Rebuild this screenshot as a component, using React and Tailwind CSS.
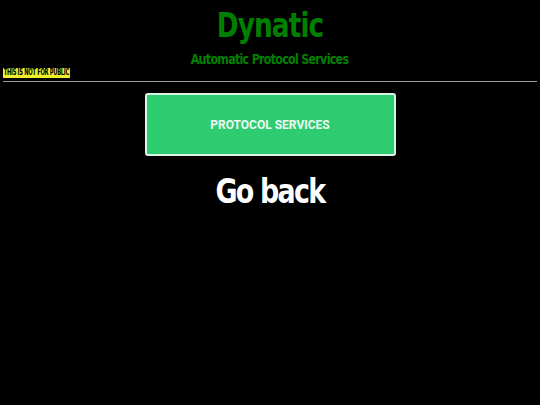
import React from 'react';

const narrow = {
  fontFamily: 'Impact, "Liberation Sans Narrow", "DejaVu Sans", sans-serif',
  fontStretch: 'condensed',
};

const App = () => {
  return (
    <div className="min-h-[405px] bg-black px-[3px]">
      <header className="flex flex-col items-center pt-[5px]">
        <h1 className="inline-block scale-x-[0.86] text-[34px] leading-[40px] font-bold tracking-[-1px] text-[#008000]" style={narrow}>
          Dynatic
        </h1>
        <p className="mt-[6px] inline-block scale-x-[0.88] text-[14px] leading-[16px] font-bold tracking-[-0.8px] text-[#008000]" style={narrow}>
          Automatic Protocol Services
        </p>
      </header>
      <div className="mt-[1px] flex">
        <span className="inline-block origin-left scale-x-[0.72] bg-[#f0f02a] px-[1px] text-[8px] leading-[10px] font-bold tracking-[-0.4px] text-black" style={narrow}>
          THIS IS NOT FOR PUBLIC
        </span>
      </div>
      <hr className="mt-[3px] border-0 border-t border-[#9a9a9a]" />
      <div className="flex flex-col items-center">
        <button className="mt-[11px] flex h-[63px] w-[251px] items-center justify-center rounded-[3px] border-2 border-[#d9f5e3] bg-[#2ecc71] text-[12px] font-bold text-[#eefaf2] font-['Roboto',sans-serif]">
          PROTOCOL SERVICES
        </button>
        <a className="mt-[15px] inline-block scale-x-[0.88] text-[34px] leading-[40px] font-bold tracking-[-2px] text-white" style={narrow}>
          Go back
        </a>
      </div>
    </div>
  );
};

export default App;
